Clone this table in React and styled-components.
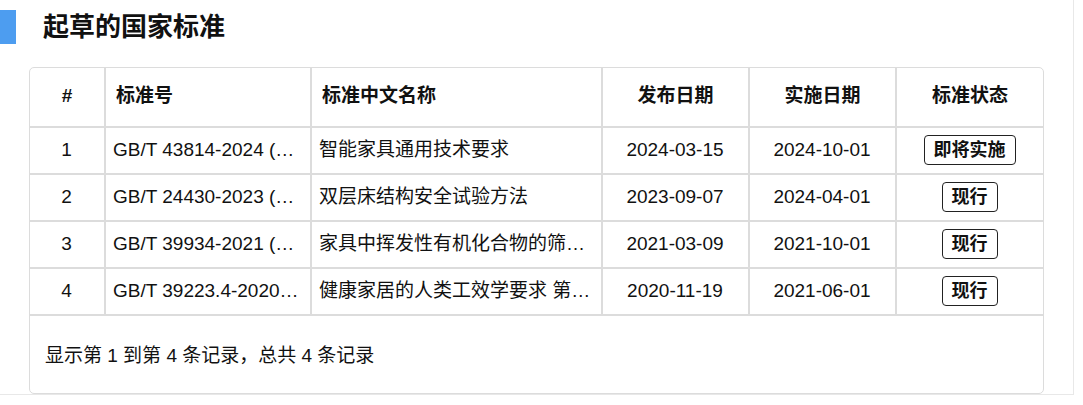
import React from 'react';
import styled, { createGlobalStyle } from 'styled-components';

const GlobalStyle = createGlobalStyle`
  html, body {
    margin: 0;
    padding: 0;
    background: #fff;
  }
  body {
    font-family: "Liberation Sans", Arial, "Noto Sans CJK SC", sans-serif;
    color: #111;
  }
`;

const rows = [
  { no: 1, code: 'GB/T 43814-2024 (智能家具通用技术要求)', name: '智能家具通用技术要求', pub: '2024-03-15', impl: '2024-10-01', status: '即将实施' },
  { no: 2, code: 'GB/T 24430-2023 (双层床结构安全试验方法)', name: '双层床结构安全试验方法', pub: '2023-09-07', impl: '2024-04-01', status: '现行' },
  { no: 3, code: 'GB/T 39934-2021 (家具中挥发性有机化合物的筛选方法)', name: '家具中挥发性有机化合物的筛选方法', pub: '2021-03-09', impl: '2021-10-01', status: '现行' },
  { no: 4, code: 'GB/T 39223.4-2020 (健康家居的人类工效学要求 第4部分)', name: '健康家居的人类工效学要求 第4部分：桌台', pub: '2020-11-19', impl: '2021-06-01', status: '现行' },
];

const Panel = styled.section`
  width: 1074px;
  height: 395px;
  box-sizing: border-box;
  border-right: 1px solid #e8e8e8;
  border-bottom: 1px solid #e8e8e8;
  display: flex;
  flex-direction: column;
`;

const Heading = styled.div`
  display: flex;
  align-items: center;
  gap: 27px;
  padding-top: 10px;
  height: 34px;
`;

const Marker = styled.span`
  width: 16px;
  height: 34px;
  background: #4d9df0;
`;

const Title = styled.h2`
  margin: 0;
  font-family: "Liberation Sans", "Noto Sans CJK SC", sans-serif;
  font-size: 26px;
  font-weight: 700;
  color: #111;
  line-height: 34px;
`;

const Card = styled.div`
  margin: 23px 0 0 29px;
  width: 1015px;
  height: 328px;
  box-sizing: border-box;
  border: 1px solid #dcdcdc;
  border-radius: 5px;
  overflow: hidden;
  display: flex;
  flex-direction: column;
`;

const Table = styled.table`
  width: 100%;
  border-collapse: collapse;
  table-layout: fixed;
`;

const Cell = styled.td`
  height: 44px;
  padding: 0 8px 1px ${({ $pad }) => $pad || 7}px;
  border-right: 2px solid #dcdcdc;
  border-bottom: 2px solid #dcdcdc;
  font-size: 19px;
  line-height: 22px;
  text-align: ${({ $center }) => ($center ? 'center' : 'left')};
  white-space: nowrap;
  overflow: hidden;
  text-overflow: ellipsis;
  color: #111;
  &:last-child {
    border-right: none;
  }
`;

const HeadCell = styled(Cell).attrs({ as: 'th' })`
  height: 56px;
  padding-bottom: 2px;
  font-weight: 700;
  padding-left: ${({ $center }) => ($center ? 8 : 10)}px;
`;

const Badge = styled.span`
  display: inline-flex;
  align-items: center;
  vertical-align: middle;
  height: 28px;
  padding: 0 9px;
  border: 1.5px solid #222;
  border-radius: 4px;
  font-size: 18px;
  font-weight: 700;
  color: #111;
  font-family: "Liberation Sans", "Noto Sans CJK SC", sans-serif;
`;

const Footer = styled.div`
  flex: 1;
  display: flex;
  align-items: center;
  padding-left: 15px;
  padding-bottom: 2px;
  font-size: 19px;
  color: #111;
`;

export default function App() {
  return (
    <>
      <GlobalStyle />
      <Panel>
        <Heading>
          <Marker />
          <Title>起草的国家标准</Title>
        </Heading>
        <Card>
          <Table>
            <colgroup>
              <col style={{ width: 75 }} />
              <col style={{ width: 206 }} />
              <col style={{ width: 291 }} />
              <col style={{ width: 147 }} />
              <col style={{ width: 147 }} />
              <col />
            </colgroup>
            <thead>
              <tr>
                <HeadCell $center>#</HeadCell>
                <HeadCell>标准号</HeadCell>
                <HeadCell>标准中文名称</HeadCell>
                <HeadCell $center>发布日期</HeadCell>
                <HeadCell $center>实施日期</HeadCell>
                <HeadCell $center>标准状态</HeadCell>
              </tr>
            </thead>
            <tbody>
              {rows.map((r) => (
                <tr key={r.no}>
                  <Cell $center>{r.no}</Cell>
                  <Cell>{r.code}</Cell>
                  <Cell>{r.name}</Cell>
                  <Cell $center>{r.pub}</Cell>
                  <Cell $center>{r.impl}</Cell>
                  <Cell $center>
                    <Badge>{r.status}</Badge>
                  </Cell>
                </tr>
              ))}
            </tbody>
          </Table>
          <Footer>显示第 1 到第 4 条记录，总共 4 条记录</Footer>
        </Card>
      </Panel>
    </>
  );
}
